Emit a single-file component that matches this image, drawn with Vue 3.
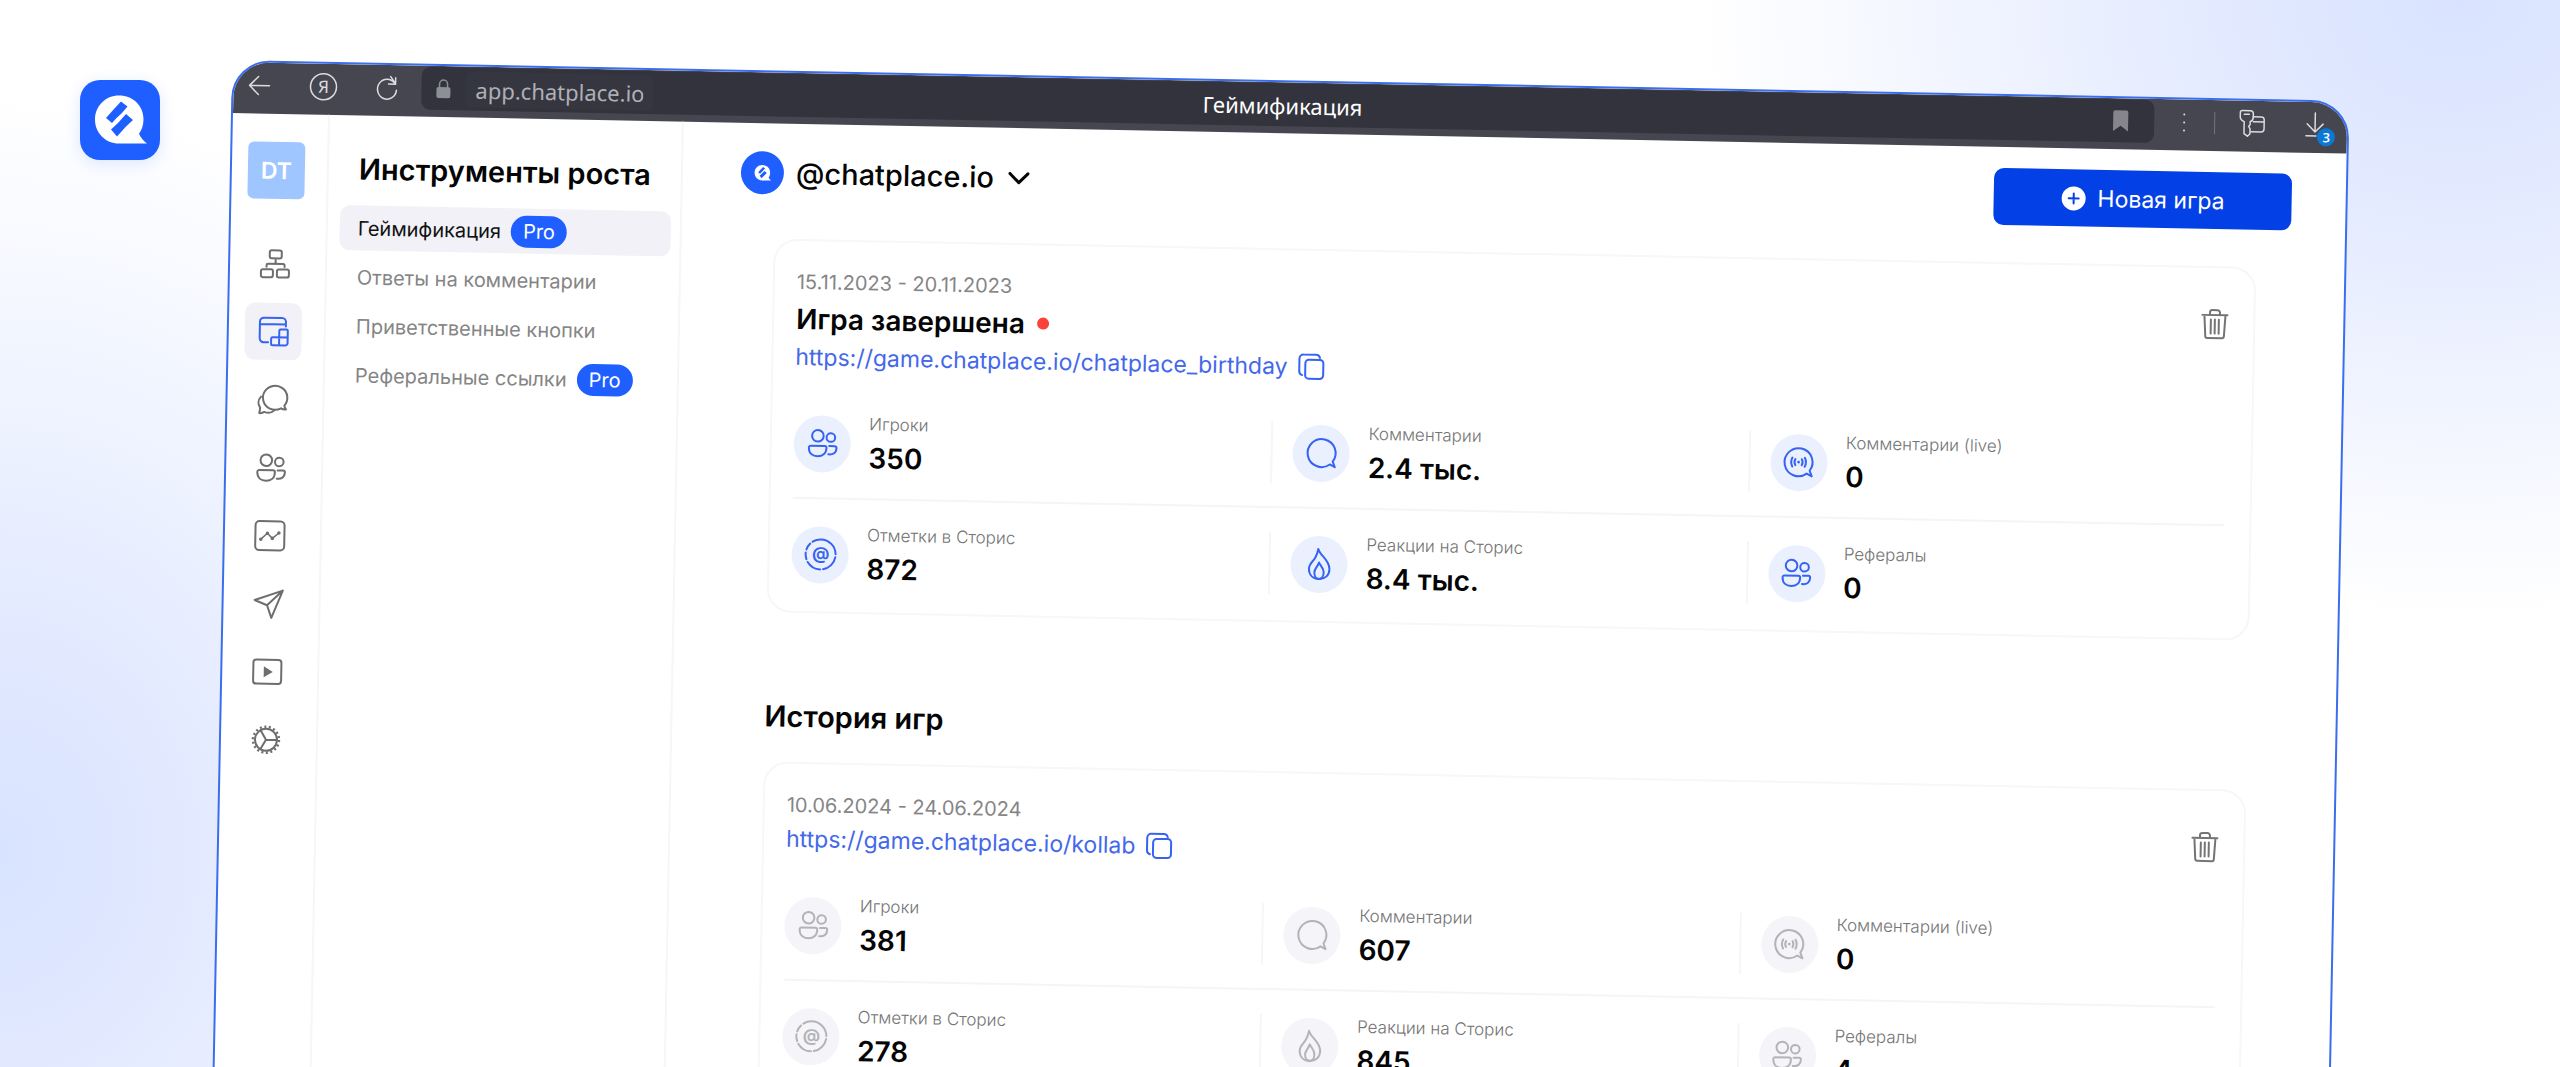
<script setup>
import { h } from 'vue'

const bubble = 'M23.3 26.3A14 14 0 1 1 26.2 23.4L28.4 29Z'
const glyphs = {
  logo: [
    ['path', { d: 'M39 15.500c14 0 24.500 10.300 24.500 23.500 0 6-1.500 10.500-4.500 14.800C61 58 63.500 61 67 63.500H39C25.500 63.500 15 53 15 39.500S25.500 15.500 39 15.500z', fill: '#fff', stroke: 'none' }],
    ['path', { d: 'M41 21.500L47.500 26.500 41.500 33.500 36.500 38 32 43 26 38 34 29zM46 34L53 40 46 46.500 37 56.500 31 49.500 38 43z', fill: '#1f5fff', stroke: 'none' }]
  ],
  back: [['path', { d: 'M22 12H2M11 3L2 12l9 9' }]],
  yandex: [
    ['circle', { cx: 14, cy: 14, r: 13 }],
    ['text', { x: 14, y: 20, 'text-anchor': 'middle', 'font-size': 17, fill: 'currentColor', stroke: 'none' }, 'Я']
  ],
  reload: [['path', { d: 'M19 7A9.500 10 0 1 0 21 14M20 1.500v6.500h-7M15 .5l5 7' }]],
  lock: [
    ['rect', { x: 0, y: 8, width: 14, height: 11, rx: 2, fill: 'currentColor', stroke: 'none' }],
    ['path', { d: 'M3 9V5a4 4 0 0 1 8 0v4' }]
  ],
  bookmark: [['path', { d: 'M2 0h11a2 2 0 0 1 2 2v19l-7.500-5.500L0 21V2a2 2 0 0 1 2-2z', fill: 'currentColor', stroke: 'none' }]],
  more: [['path', { d: 'M6 2v.1M6 10v.1M6 18v.1' }]],
  keys: [
    ['path', { d: 'M3 1h8c2 0 3 1 3 3v4c0 2-1 3-3 4v3l-1.500 1.500L11 19v5l-2.500 2.500L5 24V12C2 11 1 9 1 7V3c0-1 .8-2 2-2zM5 4.500h5' }],
    ['path', { d: 'M14 7h8c2 0 3 1 3 3v9c0 2-1 3-3 3H12M14 12h11' }]
  ],
  download: [['path', { d: 'M10 1v18M2 12l8 8 8-8M1 24h10' }]],
  sitemap: [
    ['rect', { x: 9.5, y: 1.5, width: 12, height: 8, rx: 2 }],
    ['rect', { x: 1, y: 20.5, width: 12, height: 8, rx: 2 }],
    ['rect', { x: 17, y: 20.5, width: 12, height: 8, rx: 2 }],
    ['path', { d: 'M15.500 11v4M6.500 18v-1.500a1.500 1.500 0 0 1 1.500-1.500h15a1.500 1.500 0 0 1 1.500 1.500V18' }]
  ],
  tools: [
    ['path', { d: 'M9.500 25.500H5a4 4 0 0 1-4-4V5a4 4 0 0 1 4-4h18a4 4 0 0 1 4 4v4.500M1 7.500h26' }],
    ['path', { d: 'M20.500 14a1.500 1.500 0 0 1 1.500-1.500h5.500A1.500 1.500 0 0 1 29 14v12a2.500 2.500 0 0 1-2.500 2.500H14a1.500 1.500 0 0 1-1.500-1.500v-5a1.500 1.500 0 0 1 1.500-1.500h15M20.500 14v14.500' }]
  ],
  chats: [
    ['path', { d: 'M12 23.500A12.200 12 0 1 1 27 20.500c.2 1.600.7 2.800 1.700 3.800-2 .3-3.500 0-5-1-3.500 1.900-8 1.900-11.700.2z' }],
    ['path', { d: 'M3.500 12C.3 15.500.500 20 2.800 23c0 2-.2 3.500-.800 5.500 2 .2 3.500-.3 5-1.300 3.500 1.400 7.500.8 10-1.700' }]
  ],
  users: [
    ['circle', { cx: 10, cy: 7.5, r: 5.8 }],
    ['circle', { cx: 23, cy: 9, r: 4.3 }],
    ['path', { d: 'M3 17.500h14a1.800 1.800 0 0 1 1.800 1.800c0 6-4 8.700-8.800 8.700s-8.800-2.700-8.800-8.700A1.800 1.800 0 0 1 3 17.500z' }],
    ['path', { d: 'M21.500 17.500h5.500a1.800 1.800 0 0 1 1.800 1.800c0 5-3.500 7-8 6.500' }]
  ],
  chart: [
    ['rect', { x: 0.5, y: 0.5, width: 29, height: 29, rx: 4 }],
    ['path', { d: 'M6 18.500l6.500-6 5 5L24 12', 'stroke-width': 1.5 }],
    ['path', { d: 'M6 18.500v.1M12.500 12.500v.1M17.500 17.500v.1M24 12v.1', 'stroke-width': 3.5 }]
  ],
  send: [['path', { d: 'M29 1.500L1 11.500l12.500 5L18 29zM29 1.500L13.500 16.500' }]],
  play: [
    ['rect', { x: 1, y: 3, width: 28, height: 24, rx: 3 }],
    ['path', { d: 'M11.500 9.500v11l9-5.500z', fill: 'currentColor', stroke: 'none' }]
  ],
  gear: [
    ['circle', { cx: 15, cy: 15, r: 11 }],
    ['circle', { cx: 15, cy: 15, r: 13, 'stroke-width': 2.5, 'stroke-dasharray': '2 2.538', 'stroke-linecap': 'butt' }],
    ['path', { d: 'M15 15h11M15 15L9.500 5.500M15 15L9.500 24.500' }]
  ],
  comment: [['path', { d: bubble }]],
  live: [
    ['path', { d: bubble }],
    ['circle', { cx: 15, cy: 15, r: 1.4, fill: 'currentColor', stroke: 'none' }],
    ['path', { d: 'M11.800 12q-1.800 3 0 6M18.200 12q1.800 3 0 6M8.800 10.500q-2.400 4.500 0 9M21.200 10.500q2.400 4.500 0 9' }]
  ],
  mention: [
    ['circle', { cx: 15, cy: 15, r: 15, 'stroke-dasharray': '23 3 18 3 15 3 7 3 7 3 9.250 0', transform: 'rotate(-90 15 15)' }],
    ['text', { x: 15, y: 20, 'text-anchor': 'middle', 'font-size': 17, 'font-weight': 700, fill: 'currentColor', stroke: 'none' }, '@']
  ],
  flame: [
    ['path', { d: 'M13.500 0C15 6.500 25 10.500 25 20c0 6-4 10-10 10S4.500 26.500 4.500 20c0-5 3.800-7 6.200-11.500C12 6 13 3 13.500 0z' }],
    ['path', { d: 'M14.500 13.500c1 3 4.800 5 4.800 10 0 3.800-1.800 6.500-4.600 6.500S10 27.300 10 23.500c0-4 3.500-6 4.500-10z' }]
  ],
  copy: [
    ['rect', { x: 7, y: 6, width: 18, height: 19, rx: 3.5 }],
    ['path', { d: 'M4 21.500C2 21 1 19.500 1 17.500V5a4 4 0 0 1 4-4h12.500c2 0 3.500 1 4 3' }]
  ],
  trash: [['path', { d: 'M1 6h25M8.500 5.500V3.500a2.500 2.500 0 0 1 2.500-2.500h5a2.500 2.500 0 0 1 2.500 2.500V5.500M3 6.500l1.200 20.500a2 2 0 0 0 2 2h14.600a2 2 0 0 0 2-2L24 6.500M9.500 10.500v14M13.500 10.500v14M17.500 10.500v14' }]],
  chevron: [['path', { d: 'M1 1.500l9 9 9-9' }]],
  plus: [
    ['circle', { cx: 12, cy: 12, r: 12, fill: '#fff', stroke: 'none' }],
    ['path', { d: 'M12 7v10M7 12h10', stroke: '#0341e6' }]
  ]
}

const Icon = (props) =>
  h(
    'svg',
    {
      viewBox: `0 0 ${props.w} ${props.h}`,
      width: props.w,
      height: props.h,
      fill: 'none',
      stroke: 'currentColor',
      'stroke-linecap': 'round',
      'stroke-linejoin': 'round',
      'aria-hidden': 'true'
    },
    glyphs[props.name].map(([tag, attrs, text]) => h(tag, attrs, text))
  )
Icon.props = { name: String, w: { default: 30 }, h: { default: 30 } }

const rail = [
  { icon: 'sitemap', label: 'Сценарии' },
  { icon: 'tools', label: 'Инструменты роста', active: true },
  { icon: 'chats', label: 'Чаты' },
  { icon: 'users', label: 'Контакты' },
  { icon: 'chart', label: 'Аналитика' },
  { icon: 'send', label: 'Рассылки' },
  { icon: 'play', label: 'Обучение' },
  { icon: 'gear', label: 'Настройки' }
]

const menu = [
  { label: 'Геймификация', pro: true, active: true },
  { label: 'Ответы на комментарии' },
  { label: 'Приветственные кнопки' },
  { label: 'Реферальные ссылки', pro: true }
]

const metrics = [
  ['users', 'Игроки'],
  ['comment', 'Комментарии'],
  ['live', 'Комментарии (live)'],
  ['mention', 'Отметки в Сторис'],
  ['flame', 'Реакции на Сторис'],
  ['users', 'Рефералы']
]

const games = [
  {
    dates: '15.11.2023 - 20.11.2023',
    status: 'Игра завершена',
    link: 'https://game.chatplace.io/chatplace_birthday',
    values: ['350', '2.4 тыс.', '0', '872', '8.4 тыс.', '0']
  },
  {
    heading: 'История игр',
    dates: '10.06.2024 - 24.06.2024',
    link: 'https://game.chatplace.io/kollab',
    values: ['381', '607', '0', '278', '845', '4'],
    past: true
  }
]
</script>

<template>
  <div class="stage">
    <div class="brand"><Icon name="logo" :w="80" :h="80" /></div>

    <div class="window">
      <header class="bar">
        <div class="bar-nav">
          <button aria-label="Назад"><Icon name="back" :w="24" :h="24" /></button>
          <button aria-label="Яндекс"><Icon name="yandex" :w="28" :h="28" /></button>
          <button aria-label="Обновить"><Icon name="reload" :w="24" :h="24" /></button>
        </div>
        <div class="address">
          <div class="address-left">
            <Icon class="lock" name="lock" :w="14" :h="19" />
            <input class="url" type="text" value="app.chatplace.io" aria-label="Адрес" />
          </div>
          <span class="page-title">Геймификация</span>
          <button class="mark" aria-label="В закладки"><Icon name="bookmark" :w="15" :h="21" /></button>
        </div>
        <div class="bar-tools">
          <button aria-label="Меню"><Icon class="more" name="more" :w="12" :h="20" /></button>
          <span class="bar-rule"></span>
          <button aria-label="Пароли"><Icon name="keys" :w="26" :h="28" /></button>
          <button class="downloads" aria-label="Загрузки">
            <Icon name="download" :w="20" :h="26" />
            <span class="badge">3</span>
          </button>
        </div>
      </header>

      <div class="body">
        <nav class="rail">
          <div class="user">DT</div>
          <button
            v-for="item in rail"
            :key="item.icon"
            class="rail-item"
            :class="{ active: item.active }"
            :aria-label="item.label"
          >
            <Icon :name="item.icon" />
          </button>
        </nav>

        <aside class="panel">
          <h2>Инструменты роста</h2>
          <a v-for="item in menu" :key="item.label" href="#" class="entry" :class="{ active: item.active }">
            {{ item.label }}
            <span v-if="item.pro" class="pro">Pro</span>
          </a>
        </aside>

        <main class="main">
          <div class="top">
            <button class="account">
              <span class="account-pic">
                <svg viewBox="13 13 56 53" width="18" height="17" aria-hidden="true">
                  <path d="M39 15.500c14 0 24.500 10.300 24.500 23.500 0 6-1.500 10.500-4.500 14.800C61 58 63.500 61 67 63.500H39C25.500 63.500 15 53 15 39.500S25.500 15.500 39 15.500z" fill="#fff" />
                  <path d="M41 21.500L47.500 26.500 32 43 26 38zM46 34L53 40 37 56.500 31 49.500z" fill="#1f5fff" />
                </svg>
              </span>
              @chatplace.io
              <Icon class="chevron" name="chevron" :w="20" :h="12" />
            </button>
            <button class="new-game"><Icon name="plus" :w="24" :h="24" />Новая игра</button>
          </div>

          <template v-for="game in games" :key="game.link">
            <h2 v-if="game.heading" class="heading">{{ game.heading }}</h2>
            <section class="card" :class="{ past: game.past }">
              <div class="card-head">
                <div class="card-info">
                  <p class="dates">{{ game.dates }}</p>
                  <h3 v-if="game.status">{{ game.status }}<span class="dot"></span></h3>
                  <div class="link">
                    <a href="#">{{ game.link }}</a>
                    <button aria-label="Скопировать"><Icon name="copy" :w="26" :h="26" /></button>
                  </div>
                </div>
                <button class="trash" aria-label="Удалить"><Icon name="trash" :w="27" :h="30" /></button>
              </div>
              <div class="stats">
                <div v-for="([icon, label], i) in metrics" :key="label" class="cell">
                  <div class="stat">
                    <span class="stat-icon"><Icon :name="icon" /></span>
                    <div>
                      <div class="label">{{ label }}</div>
                      <div class="value">{{ game.values[i] }}</div>
                    </div>
                  </div>
                </div>
              </div>
            </section>
          </template>
        </main>
      </div>
    </div>
  </div>
</template>

<style>
body {
  background: #fff;
}
</style>

<style scoped>
* {
  box-sizing: border-box;
}

.stage {
  position: relative;
  height: 100vh;
  overflow: hidden;
  padding: 60px 8.2% 0 9.05%;
  font-family: Inter, 'Liberation Sans', sans-serif;
  color: #050505;
  background:
    radial-gradient(ellipse 760px 620px at 96% 0, #d9e3ff 0%, #e3eaff 32%, #f3f6ff 70%, rgba(255, 255, 255, 0) 100%),
    radial-gradient(ellipse 640px 760px at 0 80%, #d8e3ff 0%, #e2e9ff 28%, #f1f5ff 65%, rgba(255, 255, 255, 0) 100%),
    #fff;
}

button {
  display: flex;
  align-items: center;
  justify-content: center;
  padding: 0;
  border: 0;
  background: none;
  color: inherit;
  font: inherit;
}

svg {
  display: block;
  flex: none;
  overflow: visible;
  stroke-width: 2px;
}

p,
h2,
h3 {
  margin: 0;
}

.brand {
  position: absolute;
  left: 80px;
  top: 80px;
  width: 80px;
  height: 80px;
  border-radius: 20px;
  background: #1f5fff;
  box-shadow: 0 4px 16px rgba(31, 95, 255, 0.14);
}

.window {
  display: flex;
  flex-direction: column;
  min-height: 100vh;
  overflow: hidden;
  border: 2px solid #3a6eee;
  border-radius: 38px;
  background: #fff;
  transform: rotate(1.1deg);
  transform-origin: 0 0;
}

/* Browser bar */
.bar {
  display: flex;
  align-items: center;
  padding: 1px 0 7px;
  background: #464650;
  color: #dcdce0;
  font-family: 'Noto Sans', sans-serif;
}

.bar svg {
  stroke-width: 1.5px;
}

.bar-nav {
  display: flex;
  gap: 40px;
  padding-left: 14px;
  margin-right: 22px;
}

.bar-nav button {
  width: 24px;
  height: 28px;
}

.address {
  flex: 1;
  display: grid;
  grid-template-columns: 1fr auto 1fr;
  align-items: center;
  height: 43px;
  padding: 0 26px 0 15px;
  border-radius: 9px;
  background: #33333d;
}

.address-left {
  display: flex;
  align-items: center;
  gap: 15px;
}

.lock {
  color: #8b9096;
}

.url {
  width: 188px;
  height: 36px;
  padding: 0 10px;
  border: 0;
  border-radius: 6px;
  background: #363640;
  color: #aeb0b6;
  font: 400 22px/36px 'Noto Sans', sans-serif;
}

.page-title {
  color: #fff;
  font-size: 22px;
  line-height: 30px;
}

.mark {
  justify-self: end;
  color: #85858b;
}

.bar-tools {
  display: flex;
  align-items: center;
  gap: 24px;
  padding: 0 12px 0 24px;
}

.bar .more {
  stroke-width: 2px;
}

.bar-rule {
  width: 1px;
  height: 22px;
  background: #74747c;
}

.downloads {
  position: relative;
  justify-content: flex-start;
  width: 30px;
  margin-left: 16px;
}

.badge {
  position: absolute;
  right: 0;
  bottom: -8px;
  width: 18px;
  height: 18px;
  border-radius: 9px;
  background: #0a78d6;
  color: #fff;
  font-size: 13px;
  font-weight: 600;
  line-height: 18px;
  text-align: center;
}

.body {
  flex: 1;
  display: flex;
}

/* Icon rail */
.rail {
  display: flex;
  flex-direction: column;
  gap: 11px;
  width: 97px;
  padding: 28px 0 0 16px;
  border-right: 2px solid #f6f6f8;
}

.user {
  display: flex;
  align-items: center;
  justify-content: center;
  width: 57px;
  height: 57px;
  margin-bottom: 25px;
  border-radius: 6px;
  background: #a0c6ff;
  color: #fff;
  font-size: 23px;
  font-weight: 600;
}

.rail-item {
  width: 57px;
  height: 57px;
  border-radius: 10px;
  color: #6e6e6e;
}

.rail-item.active {
  background: #f1f1f7;
  color: #3563f2;
}

/* Section menu */
.panel {
  display: flex;
  flex-direction: column;
  gap: 4px;
  width: 354px;
  padding: 36px 9px 0 12px;
  border-right: 2px solid #f6f6f8;
}

.panel h2 {
  margin: 0 0 14px 18px;
}

.panel h2,
.heading {
  font-size: 29px;
  line-height: 36px;
  font-weight: 600;
}

.entry {
  display: flex;
  align-items: center;
  gap: 10px;
  height: 45px;
  padding-left: 18px;
  border-radius: 10px;
  color: #858585;
  font-size: 20px;
  text-decoration: none;
}

.entry.active {
  background: #f1f1f7;
  color: #111;
}

.pro {
  padding: 0 12px;
  border-radius: 16px;
  background: #1f5fff;
  color: #fff;
  line-height: 32px;
}

/* Content */
.main {
  flex: 1;
  padding: 21px 54px 0 58px;
}

.top {
  display: flex;
  align-items: center;
  justify-content: space-between;
  margin-bottom: 37px;
}

.account {
  gap: 12px;
  font-size: 29px;
  font-weight: 500;
}

.account-pic {
  display: flex;
  align-items: center;
  justify-content: center;
  width: 43px;
  height: 43px;
  border-radius: 50%;
  background: #1f5fff;
}

.chevron {
  margin-left: 3px;
}

.account .chevron {
  stroke-width: 3px;
}

.new-game {
  gap: 12px;
  width: 298px;
  height: 57px;
  border-radius: 10px;
  background: #0341e6;
  color: #fff;
  font-size: 23px;
}

.heading {
  margin: 86px 0 27px 34px;
}

.card {
  margin: 0 34px;
  padding: 27px 25px 2px 22px;
  border: 2px solid #f7f7f8;
  border-radius: 24px;
}

.card-head {
  display: flex;
  justify-content: space-between;
  align-items: flex-start;
  margin-bottom: 17px;
}

.card-info {
  display: flex;
  flex-direction: column;
  gap: 5px;
}

.dates {
  color: #858585;
  font-size: 20px;
  line-height: 28px;
}

h3 {
  display: flex;
  align-items: center;
  gap: 12px;
  font-size: 28px;
  line-height: 36px;
  font-weight: 600;
}

.dot {
  width: 12px;
  height: 12px;
  border-radius: 50%;
  background: #fb4238;
}

.link {
  display: flex;
  align-items: center;
  gap: 11px;
  color: #3563f2;
  font-size: 23px;
  line-height: 30px;
}

.link a {
  color: #4468ea;
  text-decoration: none;
}

.trash {
  margin-top: 14px;
  color: #747474;
}

.trash svg {
  stroke-width: 2px;
}

.stats {
  display: grid;
  grid-template-columns: repeat(3, 1fr);
}

.cell {
  display: flex;
  align-items: center;
  height: 110px;
}

.cell:nth-child(-n + 3) {
  border-bottom: 2px solid #f5f5f6;
}

.stat {
  flex: 1;
  display: flex;
  align-items: center;
  gap: 18px;
  height: 62px;
}

.cell:not(:nth-child(3n + 1)) .stat {
  padding-left: 20px;
  border-left: 2px solid #f6f6f8;
}

.stat-icon {
  display: flex;
  align-items: center;
  justify-content: center;
  width: 57px;
  height: 57px;
  border-radius: 50%;
  background: #ebf0ff;
  color: #3563f2;
}

.past .stat-icon {
  background: #f4f4f9;
  color: #b3b3b8;
}

.label {
  margin-bottom: 4px;
  color: #757575;
  font-size: 17px;
  font-weight: 300;
  line-height: 24px;
}

.value {
  font-size: 28px;
  line-height: 36px;
  font-weight: 600;
}
</style>
